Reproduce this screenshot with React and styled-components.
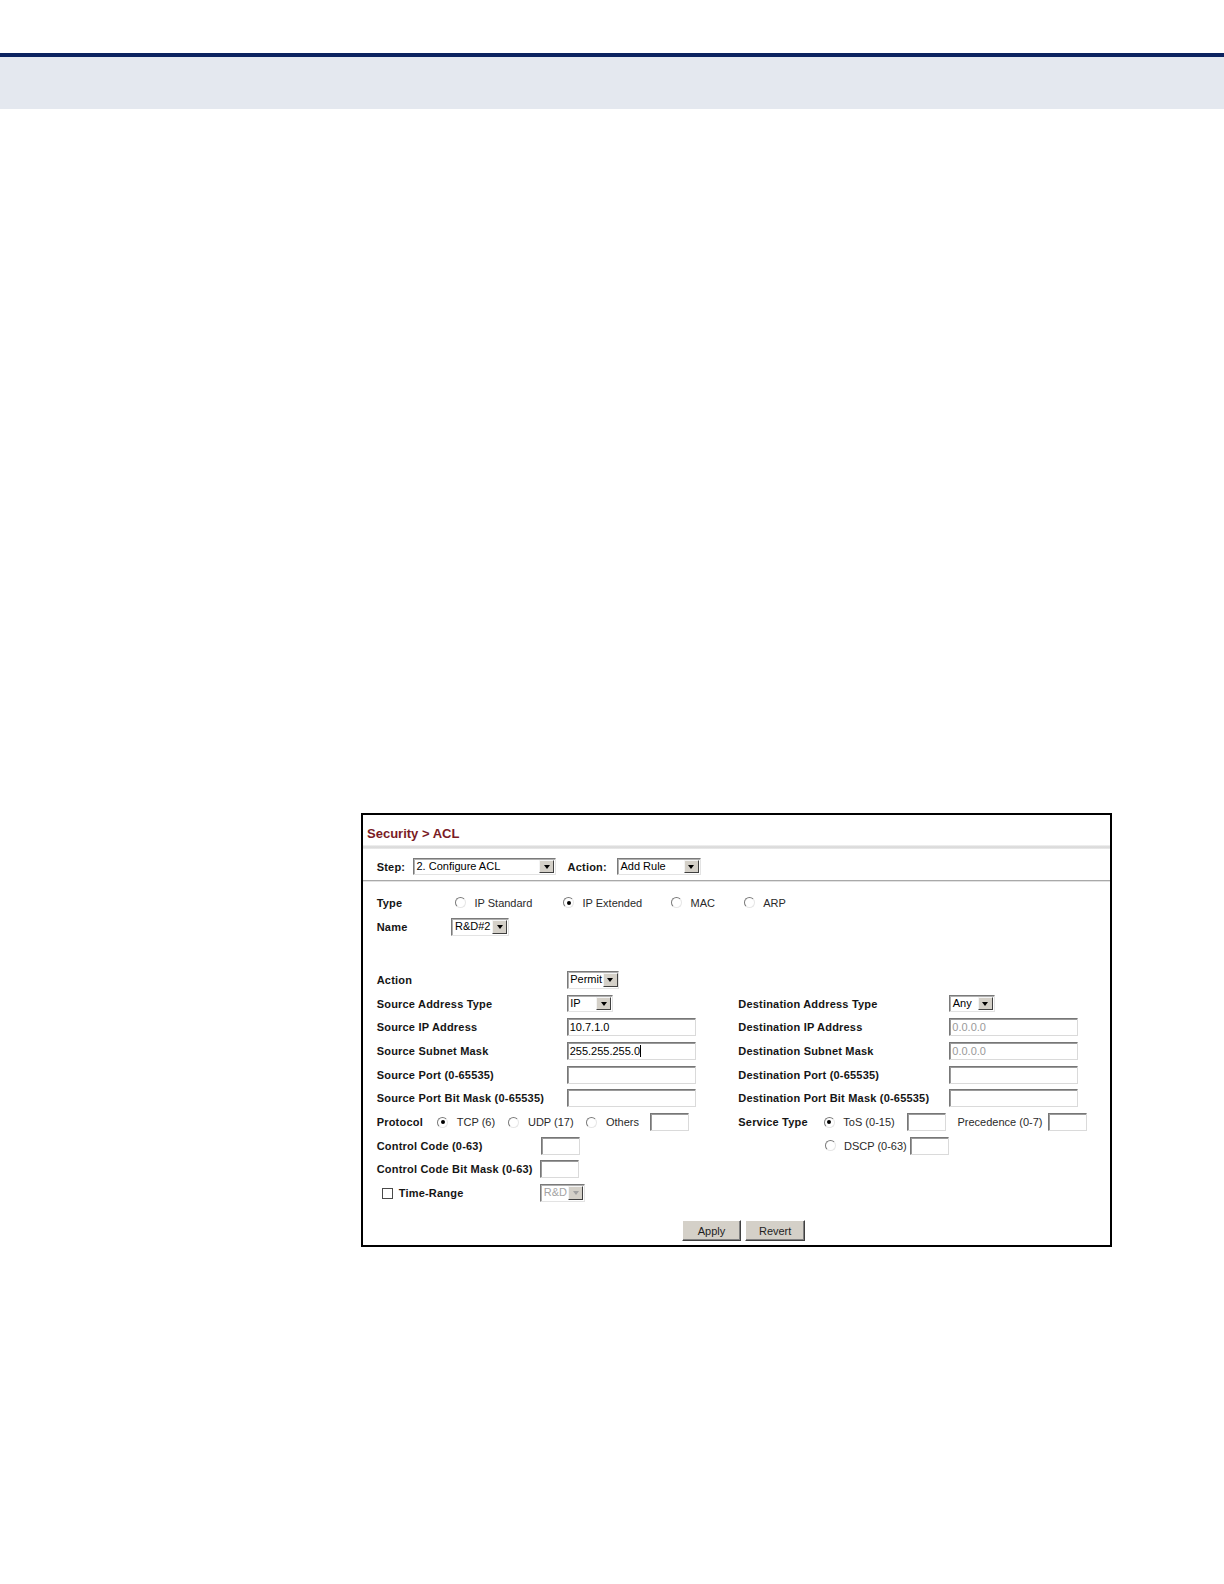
import React from 'react';
import styled, { createGlobalStyle } from 'styled-components';

const Global = createGlobalStyle`
  html, body { margin: 0; padding: 0; background: #fff; }
  body { font-family: "Liberation Sans", Arial, sans-serif; }
`;

const Page = styled.div`
  width: 1224px;
  min-height: 1584px;
  padding-top: 52.5px;
  box-sizing: border-box;
`;

const Rule = styled.div`
  height: 4px;
  background: #0b2360;
`;

const Band = styled.div`
  height: 52.5px;
  background: #e4e8ef;
`;

const Figure = styled.div`
  margin: 704px 0 0 361px;
  width: 751px;
  border: 2px solid #000;
  box-sizing: border-box;
  background: #fff;
`;

const TitleBar = styled.div`
  padding: 10.5px 0 0 4px;
  height: 29.5px;
  box-sizing: border-box;
  font-size: 13px;
  line-height: 15px;
  font-weight: bold;
  color: #7a1b25;
`;

const Separator = styled.div`
  height: 4px;
  background: linear-gradient(#f4f4f4, #d6d6d6 50%, #ececec);
`;

const StepRow = styled.div`
  display: flex;
  align-items: center;
  height: 31.2px;
  padding: 5px 0 0 13.7px;
  box-sizing: border-box;
`;

const Divider = styled.div`
  height: 1px;
  background: #a9a9a9;
  border-bottom: 1px solid #e2e2e2;
`;

const Body = styled.div`
  padding: 9.2px 0 3.4px 13.7px;
`;

const Row = styled.div`
  display: flex;
  align-items: center;
  height: ${p => p.$h || 23.7}px;
`;

const Spacer = styled.div`
  height: ${p => p.$h}px;
`;

const Half = styled.div`
  display: flex;
  align-items: center;
  width: ${p => (p.$w ? `${p.$w}px` : 'auto')};
  flex: none;
`;

const Label = styled.span`
  display: inline-flex;
  align-items: center;
  width: ${p => (p.$w ? `${p.$w}px` : 'auto')};
  margin-left: ${p => p.$ml || 0}px;
  flex: none;
  font-size: 11px;
  font-weight: bold;
  letter-spacing: 0.2px;
  color: #151515;
  white-space: nowrap;
`;

const Opt = styled.span`
  display: inline-block;
  font-size: 11px;
  color: #2a2a2a;
  white-space: nowrap;
  width: ${p => (p.$w ? `${p.$w}px` : 'auto')};
  margin-left: ${p => p.$ml || 0}px;
  flex: none;
`;

const Choice = styled.span`
  display: inline-flex;
  align-items: center;
  gap: ${p => p.$gap || 8}px;
  width: ${p => (p.$w ? `${p.$w}px` : 'auto')};
  flex: none;
`;

const RadioDot = styled.span`
  width: 11px;
  height: 11px;
  border-radius: 50%;
  box-sizing: border-box;
  border: 1px solid;
  border-color: #7a7a7a #e6e6e6 #e6e6e6 #7a7a7a;
  background: #fff;
  display: inline-flex;
  align-items: center;
  justify-content: center;
  flex: none;
  &::after {
    content: '';
    width: 4px;
    height: 4px;
    border-radius: 50%;
    background: ${p => (p.$on ? '#000' : 'transparent')};
  }
`;

const CheckBox = styled.span`
  width: 11px;
  height: 11px;
  box-sizing: border-box;
  border: 1px solid #4a4a4a;
  background: #fff;
  flex: none;
  margin-left: 5px;
  margin-right: 6px;
`;

const SelectBox = styled.div`
  display: inline-flex;
  align-items: stretch;
  box-sizing: border-box;
  width: ${p => p.$w}px;
  height: 17.5px;
  flex: none;
  border: 1px solid;
  border-color: #7a7a7a #e3e3e3 #e3e3e3 #7a7a7a;
  box-shadow: inset 1px 1px 0 #b0b0b0;
  background: #fff;
`;

const SelectText = styled.span`
  flex: 1;
  padding-left: 2.5px;
  font-size: 11px;
  line-height: 15.5px;
  color: ${p => (p.$disabled ? '#a3a3a3' : '#000')};
  white-space: nowrap;
`;

const SelectArrow = styled.span`
  width: 15px;
  margin: 1px;
  box-sizing: border-box;
  flex: none;
  background: #d4d0c8;
  border: 1px solid;
  border-color: #f4f4f4 #404040 #404040 #f4f4f4;
  display: flex;
  align-items: center;
  justify-content: center;
  &::after {
    content: '';
    width: 0;
    height: 0;
    border-left: 3.5px solid transparent;
    border-right: 3.5px solid transparent;
    border-top: 4px solid ${p => (p.$disabled ? '#a0a0a0' : '#000')};
  }
`;

const TextBox = styled.div`
  display: flex;
  align-items: center;
  width: ${p => p.$w}px;
  height: 18px;
  flex: none;
  box-sizing: border-box;
  border: 1px solid;
  border-color: #777 #dadada #dadada #777;
  box-shadow: inset 1px 1px 0 #9a9a9a;
  background: #fff;
  padding-left: 2px;
  font-size: 11px;
  color: ${p => (p.$muted ? '#9a9a9a' : '#000')};
  white-space: nowrap;
  margin-left: ${p => p.$ml || 0}px;
`;

const Caret = styled.span`
  display: inline-block;
  width: 1px;
  height: 12px;
  background: #000;
`;

const ButtonRow = styled.div`
  display: flex;
  justify-content: center;
  gap: 4px;
  margin-top: 15.2px;
`;

const Button = styled.div`
  width: 59.6px;
  height: 21.2px;
  box-sizing: border-box;
  background: #d4d0c8;
  border: 1px solid;
  border-color: #ffffff #404040 #404040 #ffffff;
  box-shadow: inset -1px -1px 0 #808080;
  display: flex;
  align-items: center;
  justify-content: center;
  font-size: 11px;
  color: #1e1e1e;
`;

const Select = ({ w, value, disabled }) => (
  <SelectBox $w={w}>
    <SelectText $disabled={disabled}>{value}</SelectText>
    <SelectArrow $disabled={disabled} />
  </SelectBox>
);

const Radio = ({ on, label, w, gap }) => (
  <Choice $w={w} $gap={gap}>
    <RadioDot $on={on} />
    {label && <Opt>{label}</Opt>}
  </Choice>
);

const LEFT = 361.6;
const LABEL_L = 190;
const LABEL_R = 211;

export default function App() {
  return (
    <>
      <Global />
      <Page>
        <Rule />
        <Band />
        <Figure>
          <TitleBar>Security &gt; ACL</TitleBar>
          <Separator />
          <StepRow>
            <Label $w={36.3}>Step:</Label>
            <Select w={143.5} value="2. Configure ACL" />
            <Label $w={49.4} $ml={11.1}>Action:</Label>
            <Select w={84} value="Add Rule" />
          </StepRow>
          <Divider />
          <Body>
            <Row $h={24.2}>
              <Label $w={78.8}>Type</Label>
              <Radio w={108} label="IP Standard" />
              <Radio w={108} on label="IP Extended" />
              <Radio w={72.7} label="MAC" />
              <Radio label="ARP" />
            </Row>
            <Row $h={24.2}>
              <Label $w={74.8}>Name</Label>
              <Select w={57.6} value="R&D#2" />
            </Row>
            <Spacer $h={28.9} />
            <Row>
              <Half $w={LEFT}>
                <Label $w={LABEL_L}>Action</Label>
                <Select w={52.5} value="Permit" />
              </Half>
            </Row>
            <Row>
              <Half $w={LEFT}>
                <Label $w={LABEL_L}>Source Address Type</Label>
                <Select w={46.5} value="IP" />
              </Half>
              <Half>
                <Label $w={LABEL_R}>Destination Address Type</Label>
                <Select w={45.5} value="Any" />
              </Half>
            </Row>
            <Row>
              <Half $w={LEFT}>
                <Label $w={LABEL_L}>Source IP Address</Label>
                <TextBox $w={129}>10.7.1.0</TextBox>
              </Half>
              <Half>
                <Label $w={LABEL_R}>Destination IP Address</Label>
                <TextBox $w={128.5} $muted>0.0.0.0</TextBox>
              </Half>
            </Row>
            <Row>
              <Half $w={LEFT}>
                <Label $w={LABEL_L}>Source Subnet Mask</Label>
                <TextBox $w={129}>255.255.255.0<Caret /></TextBox>
              </Half>
              <Half>
                <Label $w={LABEL_R}>Destination Subnet Mask</Label>
                <TextBox $w={128.5} $muted>0.0.0.0</TextBox>
              </Half>
            </Row>
            <Row>
              <Half $w={LEFT}>
                <Label $w={LABEL_L}>Source Port (0-65535)</Label>
                <TextBox $w={129} />
              </Half>
              <Half>
                <Label $w={LABEL_R}>Destination Port (0-65535)</Label>
                <TextBox $w={128.5} />
              </Half>
            </Row>
            <Row>
              <Half $w={LEFT}>
                <Label $w={LABEL_L}>Source Port Bit Mask (0-65535)</Label>
                <TextBox $w={129} />
              </Half>
              <Half>
                <Label $w={LABEL_R}>Destination Port Bit Mask (0-65535)</Label>
                <TextBox $w={128.5} />
              </Half>
            </Row>
            <Row>
              <Half $w={LEFT}>
                <Label $w={60.6}>Protocol</Label>
                <Radio on gap={8.5} w={70.7} label="TCP (6)" />
                <Radio gap={9} w={78} label="UDP (17)" />
                <Radio gap={9} w={64.4} label="Others" />
                <TextBox $w={38.6} />
              </Half>
              <Half>
                <Label $w={85.7}>Service Type</Label>
                <Radio on gap={8.4} w={83} label="ToS (0-15)" />
                <TextBox $w={39.4} />
                <Opt $ml={11.1} $w={90.5}>Precedence (0-7)</Opt>
                <TextBox $w={38.8} />
              </Half>
            </Row>
            <Row>
              <Half $w={LEFT}>
                <Label $w={164.7}>Control Code (0-63)</Label>
                <TextBox $w={38.4} />
              </Half>
              <Half>
                <Label $w={86.7} />
                <Radio gap={8} w={85} label="DSCP (0-63)" />
                <TextBox $w={39.4} />
              </Half>
            </Row>
            <Row>
              <Half $w={LEFT}>
                <Label $w={163.6}>Control Code Bit Mask (0-63)</Label>
                <TextBox $w={38.4} />
              </Half>
            </Row>
            <Row>
              <Half $w={LEFT}>
                <Label $w={163.6}>
                  <CheckBox />
                  Time-Range
                </Label>
                <Select w={44.4} value="R&D" disabled />
              </Half>
            </Row>
            <ButtonRow>
              <Button>Apply</Button>
              <Button>Revert</Button>
            </ButtonRow>
          </Body>
        </Figure>
      </Page>
    </>
  );
}
